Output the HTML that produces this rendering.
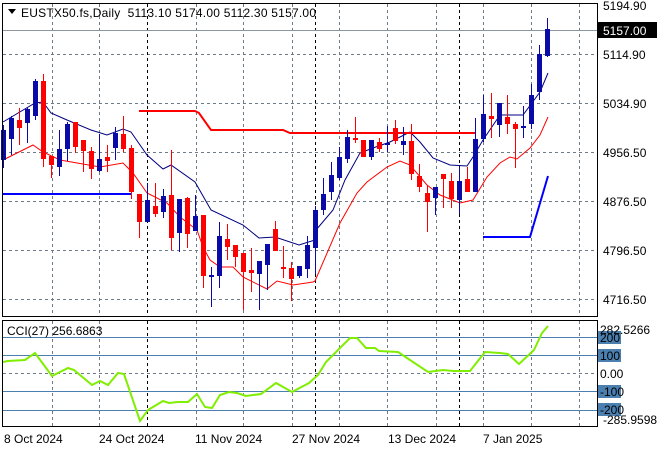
<!DOCTYPE html>
<html><head><meta charset="utf-8"><style>
body{margin:0;background:#fff;}
svg{display:block;font-family:"Liberation Sans",sans-serif;font-size:12px;}
</style></head><body>
<svg id="s" width="660" height="450" xmlns="http://www.w3.org/2000/svg">
<rect width="660" height="450" fill="#fff"/>
<g id="grid" stroke="#6e7b8b" stroke-dasharray="3,3" stroke-width="1"></g>
<line x1="2" y1="30.5" x2="597" y2="30.5" stroke="#8a96a0"/>
<g id="cci" ></g>
<g id="ind"></g>
<g id="candles"></g>
<rect x="2.5" y="3.5" width="595" height="313" fill="none" stroke="#000"/>
<rect x="2.5" y="320.5" width="595" height="106" fill="none" stroke="#000"/>
<polygon points="8,9 16,9 12,14" fill="#000"/>
<text x="21" y="17" fill="#000" textLength="295" lengthAdjust="spacing">EUSTX50.fs,Daily&#160; 5113.10 5174.00 5112.30 5157.00</text>
<g fill="#000">
<text x="603" y="10">5194.90</text>
<text x="603" y="59">5114.90</text>
<text x="603" y="108">5034.90</text>
<text x="603" y="157">4956.50</text>
<text x="603" y="206">4876.50</text>
<text x="603" y="255">4796.50</text>
<text x="603" y="304">4716.50</text>
</g>
<rect x="598" y="22" width="59" height="16" fill="#000"/>
<text x="603" y="35" fill="#fff">5157.00</text>
<text x="7" y="335" fill="#000">CCI(27) 256.6863</text>
<rect x="598" y="331" width="23" height="13" fill="#4a7fb0"/>
<rect x="598" y="349" width="23" height="13" fill="#4a7fb0"/>
<rect x="598" y="385" width="23" height="13" fill="#4a7fb0"/>
<rect x="598" y="403" width="23" height="13" fill="#4a7fb0"/>
<g fill="#000">
<text x="600" y="334">282.5266</text>
<text x="600" y="342">200</text>
<text x="600" y="360">100</text>
<text x="600" y="378">0.00</text>
<text x="600" y="396">-100</text>
<text x="600" y="414">-200</text>
<text x="603" y="424">-285.9598</text>
</g>
<g fill="#000">
<text x="4" y="443">8 Oct 2024</text>
<text x="99" y="443">24 Oct 2024</text>
<text x="195" y="443">11 Nov 2024</text>
<text x="292" y="443">27 Nov 2024</text>
<text x="388" y="443">13 Dec 2024</text>
<text x="483" y="443">7 Jan 2025</text>
</g>
</svg>
<script>
var NS="http://www.w3.org/2000/svg";
function el(p,t,a){var e=document.createElementNS(NS,t);for(var k in a)e.setAttribute(k,a[k]);document.getElementById(p).appendChild(e);return e;}
[54,103,152,201,250,299].forEach(function(y){el("grid","line",{x1:3,x2:597,y1:y+.5,y2:y+.5});});
[52,99,196,243,292,339,387,436,483,531,579].forEach(function(x){el("grid","line",{x1:x+.5,x2:x+.5,y1:4,y2:316});el("grid","line",{x1:x+.5,x2:x+.5,y1:321,y2:426});});
[147,315,459].forEach(function(x){el("grid","line",{x1:x+.5,x2:x+.5,y1:4,y2:316,stroke:"#000"});el("grid","line",{x1:x+.5,x2:x+.5,y1:321,y2:426,stroke:"#000"});});
el("grid","line",{x1:3,x2:597,y1:373.5,y2:373.5});
[337,355,391,410].forEach(function(y){el("cci","line",{x1:3,x2:597,y1:y+.5,y2:y+.5,stroke:"#4a7fb0"});});
el("cci","polyline",{fill:"none",stroke:"#80ee00","stroke-width":2,points:"3,362 8,361 25,360 35,353 52,376 68,368 74,370 92,385 100,381 108,385 118,373 124,374 140,421 148,410 163,401 169,403 178,402 188,402 197,394 205,407 212,408 220,395 229,392 237,393 246,396 261,394 276,383 292,392 309,383 318,375 326,362 350,338 357,338 366,348 375,348 379,351 398,352 428,372 443,370 453,371 470,371 485,352 500,353 508,354 519,364 534,350 542,333 548,326"});
el("ind","polyline",{fill:"none",stroke:"#000080","stroke-width":1,points:"3,122 35,103 43,102 51,113 67,120 91,130 107,135 123,129 131,132 147,155 163,169 171,165 195,182 211,210 243,225 259,238 275,237 299,245 315,240 316,230 333,210 345,180 360,153 373,148 390,142 410,132 420,142 433,158 450,165 467,166 473,157 483,140 500,115 523,115 540,92 548,73"});
el("ind","polyline",{fill:"none",stroke:"#ff0000","stroke-width":1,points:"3,160 33,145 43,152 60,160 100,167 123,163 133,173 147,193 167,203 180,217 197,230 203,247 210,260 220,267 233,267 243,277 267,289 277,281 293,285 313,282 315,281 340,223 357,193 367,182 387,167 400,161 410,165 427,185 440,195 460,203 473,200 487,177 500,163 510,157 517,159 530,148 540,135 548,117"});
el("ind","polyline",{fill:"none",stroke:"#ff0000","stroke-width":2,points:"139,111 195,111 199,113 211,130 283,130 290,133 475,133"});
el("ind","polyline",{fill:"none",stroke:"#0000ff","stroke-width":2,points:"3,194 131,194"});
el("ind","polyline",{fill:"none",stroke:"#0000ff","stroke-width":2,points:"483,237 530,237 548,176"});
var C=[[130,160,125,168,1],[118,139,116,155,1],[120,128,108,145,0],[109,123,108,143,1],[81,116,79,120,1],[81,159,74,167,0],[156,165,156,178,0],[149,167,130,176,1],[124,149,122,161,1],[122,147,122,153,0],[140,151,140,172,0],[151,169,147,179,0],[159,171,134,172,1],[157,161,145,172,0],[133,148,127,160,1],[134,149,116,152,0],[148,192,145,199,0],[194,222,194,238,0],[200,222,183,222,1],[206,214,183,217,0],[196,212,189,218,1],[195,238,150,250,0],[199,233,199,252,1],[198,234,197,248,0],[216,231,195,231,1],[215,276,215,288,0],[275,277,267,307,1],[236,276,222,288,1],[239,247,224,260,0],[245,257,245,267,0],[253,272,253,310,0],[270,273,248,292,0],[261,274,261,310,1],[244,265,244,290,1],[229,251,221,251,0],[267,269,246,278,0],[268,279,262,301,0],[266,276,266,278,1],[245,269,236,278,1],[210,248,206,274,1],[194,210,178,215,1],[175,192,162,200,1],[157,178,147,180,1],[137,159,130,163,1],[138,139,117,143,0],[140,157,140,157,0],[140,157,140,160,1],[142,149,138,152,0],[143,145,126,152,1],[128,141,120,144,0],[141,145,127,155,1],[141,174,124,180,0],[176,187,164,192,0],[193,202,185,232,0],[187,198,187,215,1],[174,179,174,208,0],[181,199,173,208,0],[181,200,167,214,1],[179,192,167,192,0],[139,192,118,192,1],[114,139,95,142,1],[116,119,93,138,0],[103,125,103,137,1],[117,124,95,134,0],[124,129,122,168,0],[126,128,106,138,1],[95,124,84,129,1],[54,92,45,100,1],[29,56,18,57,1]];
C.forEach(function(c,i){var x=3+8*i;if(i==68)x=547;var col=c[4]?"#0a0aa8":"#ff0000";
el("candles","line",{x1:x+.5,x2:x+.5,y1:c[2],y2:c[3],stroke:col});
var h=Math.max(c[1]-c[0],2);el("candles","rect",{x:x-2,y:c[0],width:5,height:h,fill:col});});
</script>
</body></html>
